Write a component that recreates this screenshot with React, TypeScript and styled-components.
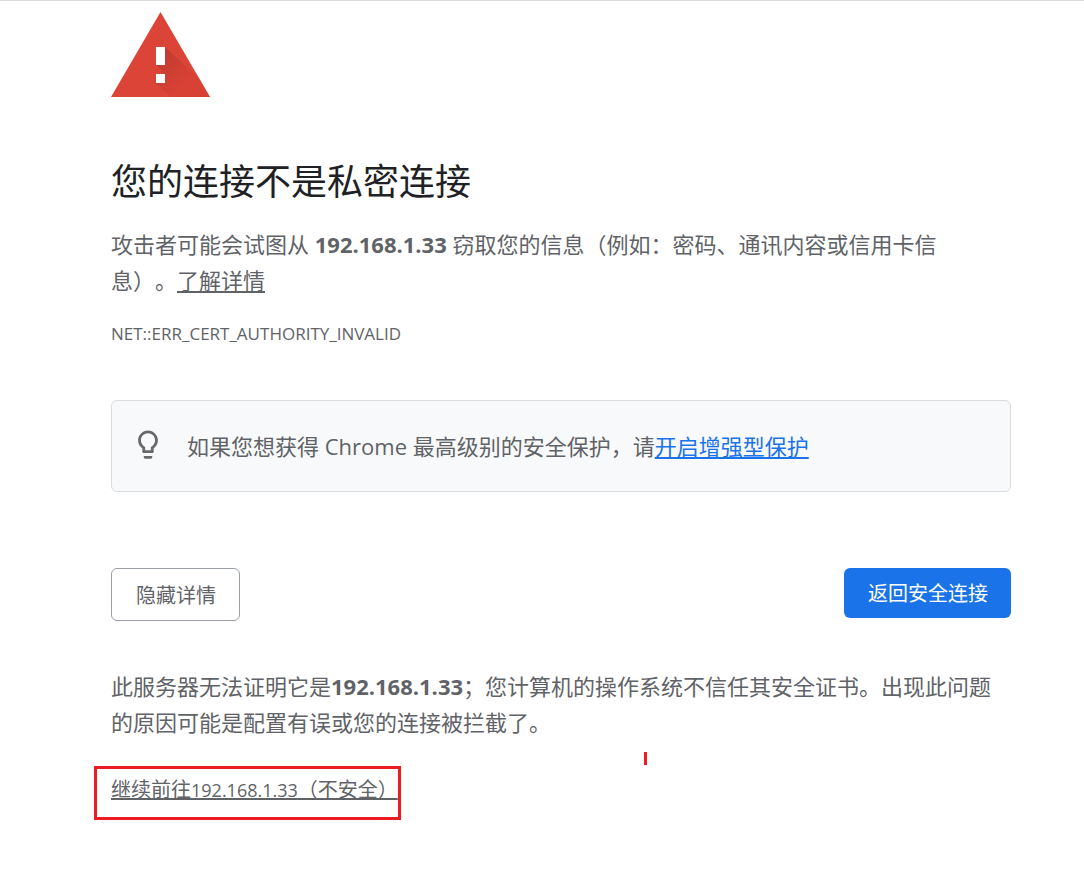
import React from "react";
import styled, { createGlobalStyle } from "styled-components";

const GlobalStyle = createGlobalStyle`
  *, *::before, *::after { box-sizing: border-box; }
  body {
    margin: 0;
    background: #fff;
    color: #5f6368;
    font-family: "Open Sans", "Noto Sans CJK SC", sans-serif;
    font-size: 22px;
    line-height: 36px;
    text-spacing-trim: space-all;
  }
`;

const Page = styled.div`
  border-top: 1px solid #dadada;
  padding: 11px 73px 60px 111px;
`;

const Interstitial = styled.main`
  max-width: 900px;
`;

const WarningIcon = styled.svg`
  display: block;
  width: 99px;
  height: 85px;
`;

const Title = styled.h1`
  margin: 62px 0 21px;
  color: #202124;
  font-size: 36px;
  font-weight: 400;
  line-height: 46px;
`;

const Paragraph = styled.p`
  margin: 0;
`;

const TextLink = styled.a<{ $primary?: boolean }>`
  color: ${({ $primary }) => ($primary ? "#1a73e8" : "inherit")};
  text-decoration: underline;
`;

const ErrorCode = styled.div`
  margin-top: 24px;
  font-size: 17px;
  line-height: 24px;
`;

const Suggestion = styled.section`
  display: flex;
  align-items: center;
  gap: 22px;
  min-height: 92px;
  margin-top: 54px;
  padding: 0 19px;
  border: 1px solid #dadce0;
  border-radius: 6px;
  background: #f8f9fa;
`;

const BulbIcon = styled.svg`
  flex: none;
  width: 34px;
  height: 34px;
  fill: #696969;
`;

const Actions = styled.div`
  display: flex;
  align-items: flex-start;
  justify-content: space-between;
  margin-top: 76px;
`;

const Button = styled.button<{ $primary?: boolean }>`
  padding: ${({ $primary }) => ($primary ? "11px 23px 9px 24px" : "12px 23px 9px 24px")};
  border: ${({ $primary }) => ($primary ? "0" : "1px solid #9aa0a6")};
  border-radius: 6px;
  background: ${({ $primary }) => ($primary ? "#1a73e8" : "#fff")};
  color: ${({ $primary }) => ($primary ? "#fff" : "#5f6368")};
  font-family: inherit;
  font-size: 20px;
  line-height: 30px;
  cursor: pointer;
`;

const Details = styled.section`
  position: relative;
  margin-top: 47px;
`;

const Highlight = styled.div`
  width: fit-content;
  margin: 26px 0 0 -17px;
  padding: 6px 0 12px 14px;
  border: 3px solid #ed1c24;
  font-size: 20px;
  line-height: 30px;
`;

const Host = styled.span`
  font-size: 18px;
`;

const RedMark = styled.span`
  position: absolute;
  top: 84px;
  left: 533px;
  width: 3px;
  height: 13px;
  background: #ed1c24;
`;

export default function App() {
  return (
    <>
      <GlobalStyle />
      <Page>
        <Interstitial>
          <WarningIcon viewBox="0 0 99 85" role="img" aria-label="警告">
            <defs>
              <linearGradient id="shade" gradientUnits="userSpaceOnUse" x1="50" y1="42" x2="76" y2="68">
                <stop offset="0" stopColor="#b93a30" stopOpacity="0.85" />
                <stop offset="1" stopColor="#d23f31" stopOpacity="0.5" />
              </linearGradient>
            </defs>
            <path d="M49.500 0L99 85H0z" fill="#db4437" />
            <path d="M54 35L88 66L99 85H59L45 71L54 62L45 53z" fill="url(#shade)" />
            <path d="M45 35h9v18h-9zM45 62h9v9h-9z" fill="#fff" />
          </WarningIcon>
          <Title>您的连接不是私密连接</Title>
          <Paragraph>
            攻击者可能会试图从 <strong>192.168.1.33</strong> 窃取您的信息（例如：密码、通讯内容或信用卡信
            <br />
            息）。<TextLink href="#learn">了解详情</TextLink>
          </Paragraph>
          <ErrorCode>NET::ERR_CERT_AUTHORITY_INVALID</ErrorCode>
          <Suggestion>
            <BulbIcon viewBox="0 1 24 24" aria-hidden="true">
              <path d="M9 20v1c0 .55.45 1 1 1h4c.55 0 1-.45 1-1v-1zM12 2C8.140 2 5 5.140 5 9c0 2.380 1.190 4.470 3 5.740V17c0 .55.45 1 1 1h6c.55 0 1-.45 1-1v-2.260c1.810-1.270 3-3.360 3-5.740 0-3.860-3.140-7-7-7zm2.850 11.100l-.85.6V16h-4v-2.300l-.85-.6C7.800 12.160 7 10.630 7 9c0-2.760 2.240-5 5-5s5 2.240 5 5c0 1.630-.8 3.160-2.150 4.100z" />
            </BulbIcon>
            <Paragraph>
              如果您想获得 Chrome 最高级别的安全保护，请
              <TextLink href="#enhanced" $primary>开启增强型保护</TextLink>
            </Paragraph>
          </Suggestion>
          <Actions>
            <Button type="button">隐藏详情</Button>
            <Button type="button" $primary>返回安全连接</Button>
          </Actions>
          <Details>
            <Paragraph>
              此服务器无法证明它是<strong>192.168.1.33</strong>；您计算机的操作系统不信任其安全证书。出现此问题的原因可能是配置有误或您的连接被拦截了。
            </Paragraph>
            <RedMark />
            <Highlight>
              <TextLink href="#proceed">
                继续前往<Host>192.168.1.33</Host>（不安全）
              </TextLink>
            </Highlight>
          </Details>
        </Interstitial>
      </Page>
    </>
  );
}
